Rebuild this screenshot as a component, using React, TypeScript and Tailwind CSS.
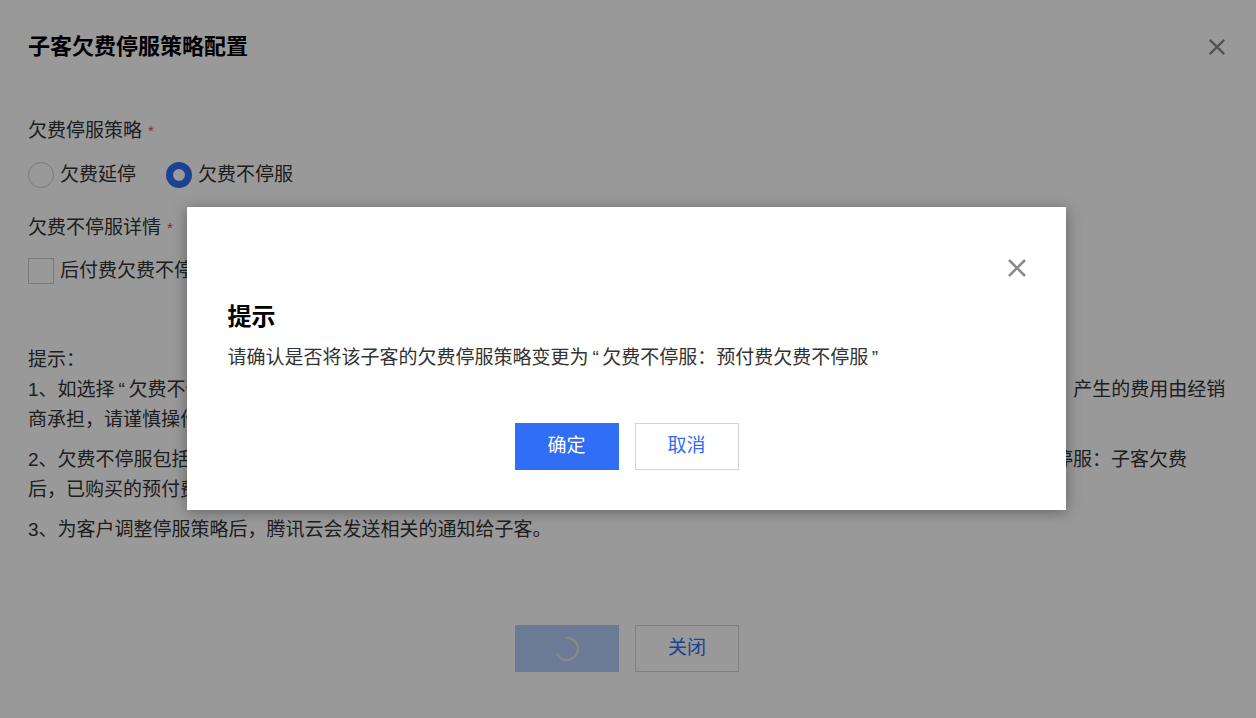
const font = 'font-["Liberation_Sans","Noto_Sans_CJK_SC",sans-serif]';

function CloseIcon({ size, className }: { size: number; className?: string }) {
  return (
    <svg width={size} height={size} viewBox="0 0 20 20" className={className}>
      <path d="M2 2 L18 18 M18 2 L2 18" stroke="currentColor" strokeWidth="2.6" fill="none" />
    </svg>
  );
}

function Spinner() {
  return (
    <svg width="28" height="28" viewBox="0 0 28 28">
      <path d="M14 3 A11 11 0 1 1 4.5 19.5" stroke="#e3e3e3" strokeWidth="2.5" fill="none" strokeLinecap="round" />
    </svg>
  );
}

function Required() {
  return <span className="ml-[6px] text-[15px] text-[#e54545]">*</span>;
}

// curly quotes are a bit wider in the original font
function Quoted({ children }: { children: React.ReactNode }) {
  return (
    <>
      <span className="pl-[4px] pr-[3.5px]">“</span>
      {children}
      <span className="pl-[3.5px] pr-[4px]">”</span>
    </>
  );
}

export default function App() {
  return (
    <div className={`relative h-[718px] w-full overflow-hidden bg-white text-[#333] ${font}`}>
      <div className="flex items-center justify-between pl-[28px] pr-[30px] pt-[32px]">
        <h1 className="h-[30px] text-[22px] font-bold leading-[30px] text-black">子客欠费停服策略配置</h1>
        <CloseIcon size={18} className="text-[#8a8a8a]" />
      </div>

      <div className="pl-[28px] text-[19px] leading-[30px]">
        <div className="mt-[54px] flex items-center">
          欠费停服策略
          <Required />
        </div>
        <div className="mt-[14px] flex items-center">
          <span className="h-[26px] w-[26px] rounded-full border border-[#cccccc] bg-white" />
          <span className="ml-[6px]">欠费延停</span>
          <span className="ml-[30px] h-[26px] w-[26px] rounded-full border-[7px] border-[#306ef6] bg-white" />
          <span className="ml-[6px]">欠费不停服</span>
        </div>
        <div className="mt-[23px] flex items-center">
          欠费不停服详情
          <Required />
        </div>
        <div className="mt-[13px] flex items-center">
          <span className="h-[26px] w-[26px] border border-[#cccccc] bg-white" />
          <span className="ml-[6px]">后付费欠费不停服</span>
          <span className="ml-[30px] h-[26px] w-[26px] border border-[#cccccc] bg-white" />
          <span className="ml-[6px]">预付费欠费不停服</span>
        </div>

        <div className="mt-[59px] whitespace-nowrap">
          <div>提示：</div>
          <div>
            <div>
              1、如选择<Quoted>欠费不停服</Quoted>，子客账户欠费后其名下的云资源不会被停服或销毁，子客在欠费期间继续使用云产品及相关服务，产生的费用由经销
            </div>
            <div>商承担，请谨慎操作。</div>
          </div>
          <div className="mt-[10px]">
            <div>
              2、欠费不停服包括后付费欠费不停服
              <span className="tracking-[-0.5px]">和预付费欠费不停服。后付费欠费不停服：子客</span>
              欠费后，云资源不停服；预付费欠费不停服：子客欠费
            </div>
            <div>后，已购买的预付费资源到期后不会被停服。</div>
          </div>
          <div className="mt-[10px]">3、为客户调整停服策略后，腾讯云会发送相关的通知给子客。</div>
        </div>
      </div>

      <div className="mt-[80px] flex justify-center gap-[16px] pr-[2px]">
        <button className="flex h-[47px] w-[104px] items-center justify-center bg-[#b2cdfa]">
          <Spinner />
        </button>
        <button className="h-[47px] w-[104px] border border-[#d0d5dd] bg-white text-[19px] text-[#306ef6]">关闭</button>
      </div>

      <div className="absolute inset-0 flex items-center justify-center bg-black/40 pb-[1px] pr-[4px]">
        <div className="w-[879px] bg-white pb-[40px] shadow-[0_2px_14px_rgba(0,0,0,0.35)]">
          <div className="flex justify-end pr-[39px] pt-[51px]">
            <CloseIcon size={20} className="text-[#8a8a8a]" />
          </div>
          <div className="px-[41px]">
            <h2 className="mt-[23px] text-[24px] font-bold leading-[32px] text-black">提示</h2>
            <p className="mt-[10px] text-[19px] leading-[30px] text-[#333]">
              请确认是否将该子客的欠费停服策略变更为<Quoted>欠费不停服：预付费欠费不停服</Quoted>
            </p>
          </div>
          <div className="mt-[50px] flex justify-center gap-[16px] pl-[1px]">
            <button className="h-[47px] w-[104px] bg-[#306ef6] text-[19px] text-white">确定</button>
            <button className="h-[47px] w-[104px] border border-[#d0d5dd] bg-white text-[19px] text-[#306ef6]">取消</button>
          </div>
        </div>
      </div>
    </div>
  );
}
